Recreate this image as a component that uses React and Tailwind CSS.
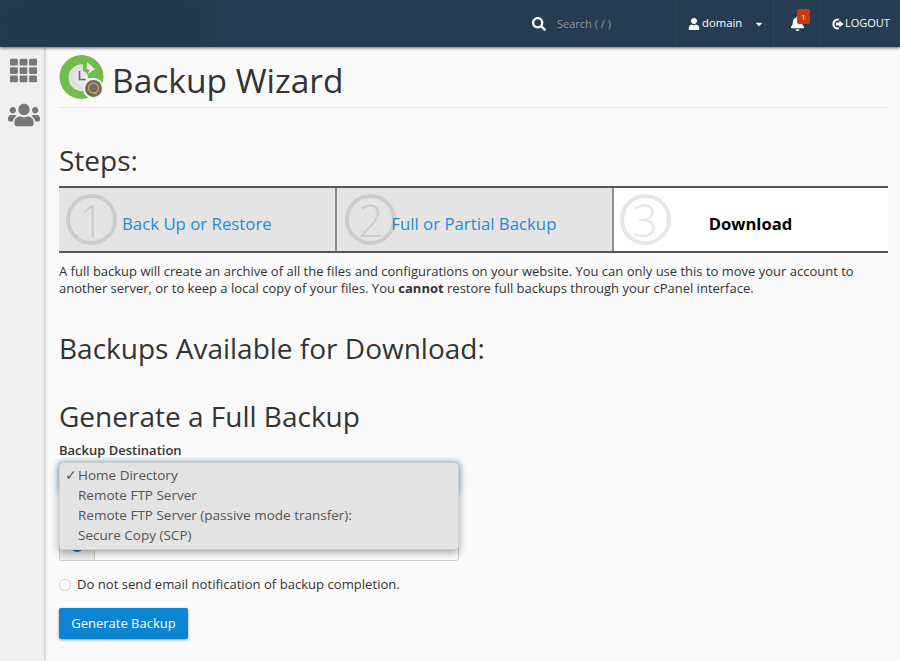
import React from "react";
import { FaSearch, FaUser, FaCaretDown, FaBell, FaTh, FaUsers } from "react-icons/fa";

const steps = [
	{ num: 1, label: "Back Up or Restore", gap: "ml-[5px]", cell: "pl-[7px]" },
	{ num: 2, label: "Full or Partial Backup", gap: "-ml-[5px]", cell: "pl-[8px] border-l-2 border-[#8f8f8f]" },
];

const options = [
	"Home Directory",
	"Remote FTP Server",
	"Remote FTP Server (passive mode transfer):",
	"Secure Copy (SCP)",
];

const StepNumber = ({ num, light }) => (
	<span
		className={`flex items-center justify-center w-[51px] h-[51px] shrink-0 rounded-full border-[4px] font-light text-[44px] leading-none ${
			light ? "border-[#e6e6e6] text-[#e6e6e6]" : "border-[#cccccc] text-[#cccccc]"
		}`}
	>
		{num}
	</span>
);

const LogoutIcon = () => (
	<svg width="13" height="12" viewBox="0 0 13 12" fill="none">
		<path d="M7 1.4A4.6 4.6 0 1 0 7 10.6" stroke="#fff" strokeWidth="2" strokeLinecap="round" />
		<path d="M5 4.6h3.4V2.4L12.6 6 8.4 9.6V7.4H5z" fill="#fff" />
	</svg>
);

const BackupLogo = () => (
	<svg width="45" height="46" viewBox="0 0 45 46" className="shrink-0">
		<circle cx="22.5" cy="23" r="22" fill="#72bb4d" />
		<path d="M24 10.2A13.5 13.5 0 1 0 36.5 24L28 24A5 5 0 0 1 24 18z" fill="#e0e0e0" />
		<circle cx="22" cy="23.5" r="7" fill="#e8e8e8" />
		<path d="M28 8l8 7-7 5 1.5-4-3-1.5z" fill="#e8e8e8" />
		<path d="M20.5 17v8.5h6" fill="none" stroke="#666" strokeWidth="1.6" />
		<circle cx="34.5" cy="34.5" r="10.5" fill="#f2f2f2" />
		<circle cx="34.5" cy="34.5" r="8.5" fill="#6b6b6b" />
		<circle cx="34.5" cy="34" r="5" fill="none" stroke="#e2962c" strokeWidth="1.4" />
		<path d="M34 39.5h4" stroke="#e2962c" strokeWidth="1.4" />
	</svg>
);

const App = () => {
	return (
		<div className="relative flex flex-col h-[661px] overflow-hidden bg-[#fafafa] font-['Open_Sans',sans-serif] text-[#333]">
			<header className="relative z-10 flex items-stretch justify-between h-[47px] shrink-0 bg-[#263c52] shadow-[0_1px_3px_rgba(0,0,0,0.6)]">
				<div className="w-[215px] overflow-hidden">
					<div className="w-[205px] h-full bg-[#243a4c] blur-sm"></div>
				</div>
				<div className="flex items-stretch text-white text-[11.3px]">
					<div className="flex items-center w-[145px] pl-[1px]">
						<FaSearch className="text-[14px]" />
						<span className="ml-[11px] mt-[1px] text-[#8a96a2] text-[11px]">Search ( / )</span>
					</div>
					<div className="flex items-center w-[97px] pl-[11px] border-l border-[#2f4459]">
						<FaUser className="text-[12px]" />
						<span className="ml-[2px]">domain</span>
						<FaCaretDown className="ml-[12px] text-[10px]" />
					</div>
					<div className="relative flex items-center w-[46px] pl-[16px] border-l border-[#2f4459]">
						<FaBell className="text-[15px]" />
						<span className="absolute left-[23px] top-[9px] flex items-center justify-center w-[13px] h-[15px] rounded-[2px] bg-[#c93a10] text-[8px] leading-none">
							1
						</span>
					</div>
					<div className="flex items-center w-[81px] pl-[11px] border-l border-[#2f4459]">
						<LogoutIcon />
						<span className="ml-[1px] text-[11px]">LOGOUT</span>
					</div>
				</div>
			</header>

			<div className="flex flex-1 min-h-0">
				<aside className="flex flex-col items-center w-[44px] shrink-0 pt-[10px] pl-[3px] bg-[#efefef] text-[#777] shadow-[1px_0_3px_rgba(0,0,0,0.25)]">
					<FaTh className="text-[27px]" />
					<FaUsers className="mt-[15px] text-[32px]" />
				</aside>

				<main className="flex-1 pl-[15px] pr-[12px]">
					<div className="flex items-start h-[61px] pt-[7px] border-b border-[#eaeaea]">
						<BackupLogo />
						<h1 className="ml-[8px] mt-[4px] text-[33.5px] leading-[44px] text-[#333]">Backup Wizard</h1>
					</div>

					<h2 className="mt-[35px] text-[28px] leading-[34px]">Steps:</h2>

					<div className="grid grid-cols-3 h-[67px] mt-[9px] border-y-2 border-[#555]">
						{steps.map((s) => (
							<div key={s.num} className={`flex items-center bg-[#e4e4e4] ${s.cell}`}>
								<StepNumber num={s.num} />
								<a href="#" className={`mt-[9px] text-[16.8px] text-[#1b8dd8] ${s.gap}`}>
									{s.label}
								</a>
							</div>
						))}
						<div className="flex items-center bg-white pl-[6px] border-l-2 border-[#8f8f8f]">
							<StepNumber num={3} light />
							<span className="ml-[38px] mt-[9px] text-[16.6px] font-bold text-black">Download</span>
						</div>
					</div>

					<p className="mt-[10px] text-[13px] leading-[17px]">
						A full backup will create an archive of all the files and configurations on your website. You can
						only use this to move your account to another server, or to keep a local copy of your files. You{" "}
						<strong>cannot</strong> restore full backups through your cPanel interface.
					</p>

					<h2 className="mt-[34px] text-[28px] leading-[34px]">Backups Available for Download:</h2>
					<h2 className="mt-[34px] text-[28px] leading-[34px]">Generate a Full Backup</h2>

					<label className="block mt-[8px] text-[13px] leading-[18px] font-semibold">Backup Destination</label>

					<div className="relative w-[400px] mt-[3px]">
						<div className="h-[30px] rounded-[3px] border border-[#8cc4ea] shadow-[0_0_6px_rgba(60,150,220,0.6)] bg-white"></div>

						<div className="flex h-[31px] mt-[38px] rounded-b-[3px] border border-[#ccc] bg-white">
							<div className="flex items-center justify-center w-[35px] bg-[#eeeeee] border-r border-[#ccc]">
								<span className="w-[12px] h-[12px] rounded-full bg-[#0a6fd6]"></span>
							</div>
						</div>

						<ul className="absolute left-0 top-0 w-[400px] h-[88px] py-[2px] rounded-[4px] bg-[#e3e3e3] border border-[#cfcfcf] shadow-[0_3px_8px_rgba(0,0,0,0.35)] text-[13.5px] leading-[20px] font-medium text-[#555]">
							{options.map((o, i) => (
								<li key={o} className="relative pl-[18px]">
									{i === 0 && <span className="absolute left-[5px]">✓</span>}
									{o}
								</li>
							))}
						</ul>
					</div>

					<div className="flex items-center mt-[14px]">
						<span className="w-[12px] h-[12px] rounded-full bg-white border border-[#ccc]"></span>
						<span className="ml-[6px] mb-[2px] text-[13.1px] leading-[18px]">Do not send email notification of backup completion.</span>
					</div>

					<button className="block mt-[13px] w-[129px] h-[31px] pt-[1px] rounded-[2px] bg-[#0a85d1] text-white text-[13px] shadow-[0_1px_3px_rgba(0,0,0,0.4)]">
						Generate Backup
					</button>
				</main>
			</div>
		</div>
	);
};

export default App;
